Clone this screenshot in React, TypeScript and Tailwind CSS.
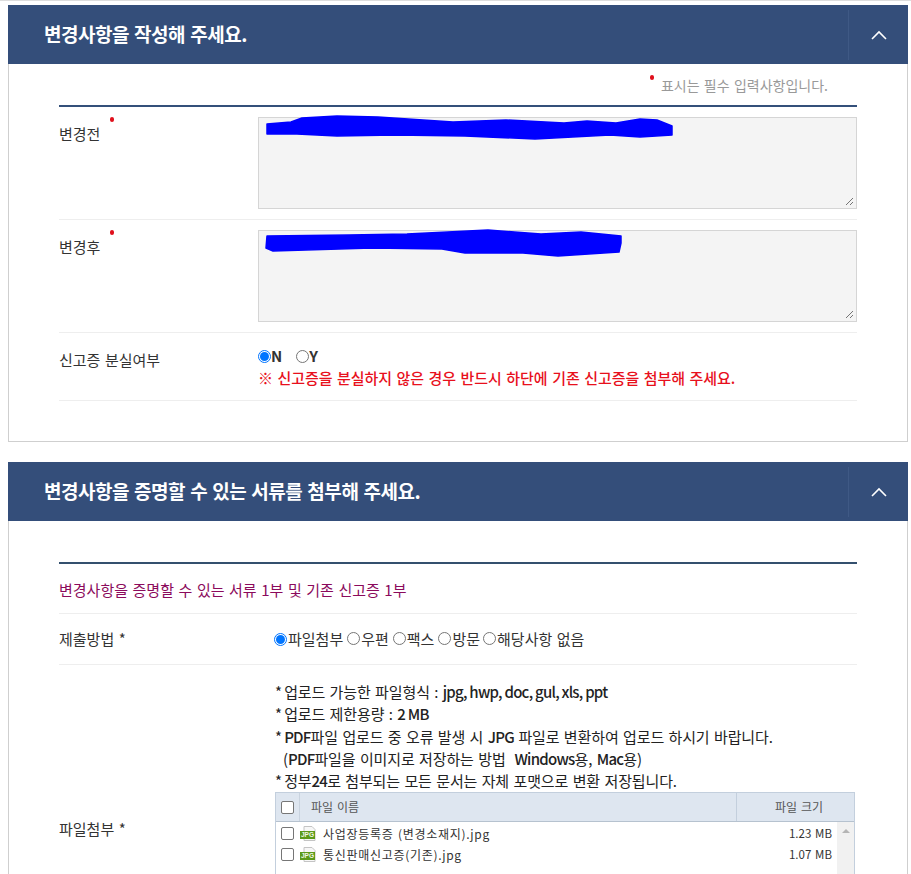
import React from 'react';

const FONT = "font-['Noto_Sans_CJK_KR','Noto_Sans',sans-serif]";

function PanelHeader({ title }: { title: string }) {
  return (
    <div className="flex h-[59px] items-center bg-[#344e7a] text-white">
      <h2 className="flex-1 pl-[36px] text-[19px] font-semibold tracking-[-0.47px]">{title}</h2>
      <div className="flex h-[50px] w-[60px] items-center justify-center border-l border-[#3f5985]">
        <svg width="16" height="10" viewBox="0 0 16 10" fill="none" stroke="white" strokeWidth="1.6">
          <path d="M1 9 L8 2 L15 9" />
        </svg>
      </div>
    </div>
  );
}

function RedDot() {
  return <span className="block h-[5px] w-[4px] rounded-full bg-[#e0101c]" />;
}

function Radio({ checked }: { checked?: boolean }) {
  return (
    <span className={`inline-flex h-[13px] w-[13px] shrink-0 items-center justify-center rounded-full border ${checked ? 'border-[#0075ff]' : 'border-[#767676]'} bg-white`}>
      {checked && <span className="h-[9px] w-[9px] rounded-full bg-[#0075ff]" />}
    </span>
  );
}

function Check() {
  return <span className="block h-[13px] w-[13px] rounded-[2px] border border-[#767676] bg-white" />;
}

function TextBox({ scribble }: { scribble: string }) {
  return (
    <div className="relative h-[92px] w-[599px] border border-[#d5d5d5] bg-[#f4f4f4]">
      <svg className="absolute left-0 top-[-4px]" width="599" height="40" viewBox="0 0 599 40">
        <path d={scribble} fill="#0000ff" stroke="#0000ff" strokeWidth="1.5" strokeLinejoin="round" />
      </svg>
      <svg className="absolute bottom-[2px] right-[2px]" width="9" height="9" viewBox="0 0 9 9" stroke="#666" strokeWidth="0.9">
        <path d="M1 8 L8 1 M5 8 L8 5" />
      </svg>
    </div>
  );
}

function JpgIcon() {
  return (
    <svg width="17" height="15" viewBox="0 0 17 15" className="shrink-0">
      <path d="M4 0.5 H12 L15 3.5 V14.5 H4 Z" fill="#f7f7f7" stroke="#c4c4c4" />
      <rect x="0" y="5" width="15" height="8" fill="#5b9a1a" />
      <text x="7.5" y="11.3" textAnchor="middle" fontSize="6.5" fontWeight="700" fill="#f2f8e6" fontFamily="Liberation Sans">JPG</text>
    </svg>
  );
}

function FileRow({ name, size }: { name: string; size: string }) {
  return (
    <div className="flex h-[21px] items-center pl-[5px] pr-[4px]">
      <Check />
      <span className="ml-[6px]"><JpgIcon /></span>
      <span className="ml-[6px] flex-1 text-[12px] tracking-[0.7px] text-[#333]">{name}</span>
      <span className="text-[11.5px] text-[#333]">{size}</span>
    </div>
  );
}

// latin parts of the upload notes are narrower than the hangul around them
function Mark({ children }: { children: React.ReactNode }) {
  return <b className="font-medium tracking-[-0.75px] [word-spacing:0px]">{children}</b>;
}

function Star() {
  return <span className="[word-spacing:-1px]">* </span>;
}

export default function App() {
  return (
    <div className={`h-[874px] w-[911px] overflow-hidden bg-white ${FONT} text-[15px] [word-spacing:1.2px] text-[#333]`}>
      <div className="h-px bg-[#dddddd]" />
      <div className="ml-[8px] mt-[4px] w-[900px]">
        {/* first panel */}
        <PanelHeader title="변경사항을 작성해 주세요." />
        <div className="h-[378px] border-x border-b border-[#cfcfcf] px-[50px]">
          <div className="flex h-[41px] items-start justify-end pr-[29px] pt-[11px] text-[14px] text-[#999]">
            <span className="mr-[7px]"><RedDot /></span>
            <span className="leading-[20px]">표시는 필수 입력사항입니다.</span>
          </div>
          <div className="h-[2px] bg-[#34507a]" />

          <div className="flex h-[113px] border-b border-[#eeeeee] pt-[10px]">
            <div className="relative w-[199px] pt-[6px] leading-[22px]">
              변경전
              <span className="absolute left-[51px] top-0"><RedDot /></span>
            </div>
            <TextBox scribble="M8 10 L32 8 L43 4 L78 2 L119 3 L194 8 L247 6 L305 9 L328 7 L357 9 L381 5 L398 6 L413 12 L413 21 L381 23 L351 21 L276 25 L206 22 L136 21 L78 22 L38 20 L8 20 Z" />
          </div>

          <div className="flex h-[113px] border-b border-[#eeeeee] pt-[10px]">
            <div className="relative w-[199px] pt-[6px] leading-[22px]">
              변경후
              <span className="absolute left-[51px] top-0"><RedDot /></span>
            </div>
            <TextBox scribble="M8 9 L90 8 L148 7 L229 3 L282 7 L322 5 L362 9 L362 16 L360 25 L299 29 L264 26 L206 26 L183 22 L113 21 L14 24 L7 21 Z" />
          </div>

          <div className="flex h-[68px] border-b border-[#eeeeee]">
            <div className="w-[199px] pt-[15px] leading-[24px]">신고증 분실여부</div>
            <div className="pt-[13px]">
              <div className="flex h-[20px] items-center font-bold">
                <Radio checked />
                <span>N</span>
                <span className="ml-[14px] flex items-center"><Radio /><span>Y</span></span>
              </div>
              <p className="font-medium leading-[23px] tracking-[-0.05px] text-[#e8101c]">
                ※ 신고증을 분실하지 않은 경우 반드시 하단에 기존 신고증을 첨부해 주세요.
              </p>
            </div>
          </div>
        </div>

        {/* second panel */}
        <div className="mt-[20px]">
          <PanelHeader title="변경사항을 증명할 수 있는 서류를 첨부해 주세요." />
          <div className="border-x border-[#cfcfcf] px-[50px] pt-[41px]">
            <div className="h-[2px] bg-[#34506e]" />
            <div className="flex h-[50px] items-center border-b border-[#eeeeee] pt-[4px] text-[#8b0a5c]">
              변경사항을 증명할 수 있는 서류 1부 및 기존 신고증 1부
            </div>
            <div className="flex h-[51px] items-center border-b border-[#eeeeee]">
              <div className="w-[215px]">제출방법 *</div>
              <div className="flex items-center">
                <Radio checked /><span className="ml-px">파일첨부</span>
                <span className="ml-[4px]"><Radio /></span><span className="ml-px">우편</span>
                <span className="ml-[4px]"><Radio /></span><span className="ml-px">팩스</span>
                <span className="ml-[4px]"><Radio /></span><span className="ml-px">방문</span>
                <span className="ml-[3px]"><Radio /></span><span className="ml-px">해당사항 없음</span>
              </div>
            </div>
            <div className="flex">
              <div className="flex w-[216px] items-start pt-[153px]">파일첨부 *</div>
              <div className="w-[580px] pt-[16px]">
                <div className="text-[#222] leading-[22.3px] tracking-[-0.12px]">
                  <p><Star />업로드 가능한 파일형식 : <Mark>jpg, hwp, doc, gul, xls, ppt</Mark></p>
                  <p><Star />업로드 제한용량 : <Mark>2 MB</Mark></p>
                  <p><Star /><Mark>PDF</Mark>파일 업로드 중 오류 발생 시 <Mark>JPG</Mark> 파일로 변환하여 업로드 하시기 바랍니다.</p>
                  <p className="pl-[8px]">(<Mark>PDF</Mark>파일을 이미지로 저장하는 방법&nbsp; <Mark>Windows</Mark>용, <Mark>Mac</Mark>용)</p>
                  <p><Star />정부<Mark>24</Mark>로 첨부되는 모든 문서는 자체 포맷으로 변환 저장됩니다.</p>
                </div>
                <div className="border-x border-t border-[#c3cfdd] text-[12px]">
                  <div className="flex h-[29px] items-center border-b border-[#b6c2cf] bg-[#dee6f0] text-[#555]">
                    <div className="flex h-full w-[24px] items-center justify-center border-r border-[#c9d3df]"><Check /></div>
                    <div className="flex-1 pl-[11px]">파일 이름</div>
                    <div className="flex h-full w-[118px] items-center justify-center border-l border-[#c3cfdd] pl-[7px]">파일 크기</div>
                  </div>
                  <div className="relative h-[60px] pr-[18px] pt-px">
                    <FileRow name="사업장등록증 (변경소재지).jpg" size="1.23 MB" />
                    <FileRow name="통신판매신고증(기존).jpg" size="1.07 MB" />
                    <div className="absolute right-0 top-0 flex h-full w-[17px] justify-center bg-[#f1f1f1] pt-[7px]">
                      <span className="h-0 w-0 border-x-[4px] border-b-[4px] border-x-transparent border-b-[#b5b5b5]" />
                    </div>
                  </div>
                </div>
              </div>
            </div>
          </div>
        </div>
      </div>
    </div>
  );
}
